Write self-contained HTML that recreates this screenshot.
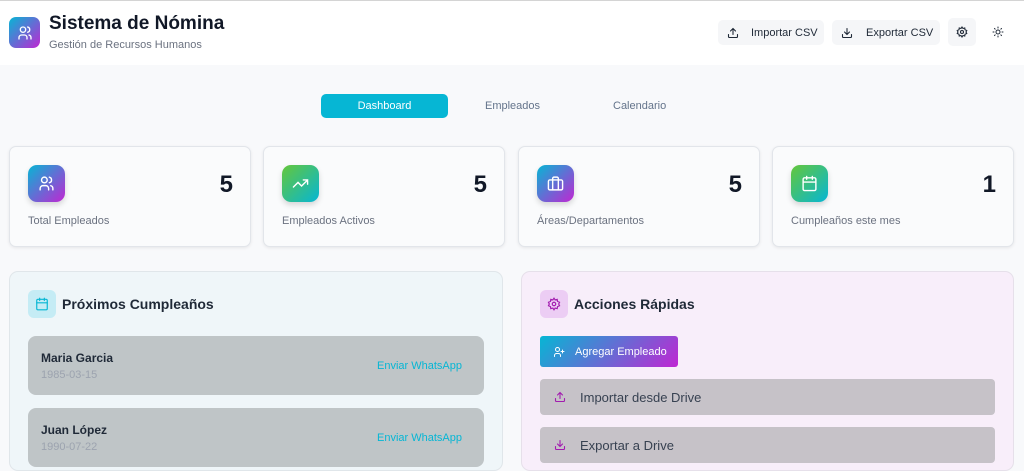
<!DOCTYPE html>
<html><head><meta charset="utf-8"><style>
*{box-sizing:border-box;margin:0;padding:0}
body{width:1024px;height:460px;overflow:hidden;background:#f8f9fb;font-family:"Liberation Sans",sans-serif;color:#111827;position:relative}
.a{position:absolute}
svg{display:block}
.hdr{left:0;top:0;width:1024px;height:65px;background:#fff;border-top:1px solid #d4d4d4}
.btn{background:#f5f6f8;border-radius:5px;font-size:11px;color:#1f2937;display:flex;align-items:center}
.card{background:#fafbfc;border:1px solid #e2e5ea;border-radius:7px;box-shadow:0 1px 3px rgba(0,0,0,.08);width:242px;height:101px;top:146px}
.ic{left:18px;top:18px;width:37px;height:37px;border-radius:9px;box-shadow:0 3px 6px rgba(0,0,0,.15);display:flex;align-items:center;justify-content:center}
.num{right:17px;top:24px;font-size:24px;font-weight:bold;color:#111827}
.lbl{left:18px;top:68px;font-size:11px;color:#6b7280}
.g1{background:linear-gradient(135deg,#06b6d4,#c026d3)}
.g2{background:linear-gradient(135deg,#65c73a,#06b6d4)}
.row{background:#bfc5c7;border-radius:8px;width:456px;height:59px;left:18px}
.nm{left:13px;top:15px;font-size:12px;font-weight:bold;color:#1f2937}
.dt{left:13px;top:33px;font-size:11px;color:#9ca3af}
.wa{right:22px;top:24px;font-size:11px;color:#06b6d4}
.gr{background:#c6c2c8;border-radius:4px;width:455px;height:36px;left:18px;font-size:13px;color:#374151;display:flex;align-items:center}
</style></head><body>
<div class="a hdr"></div>
<div class="a g1" style="left:9px;top:17px;width:31px;height:31px;border-radius:7px;display:flex;align-items:center;justify-content:center">
<svg width="16" height="16" viewBox="0 0 24 24" fill="none" stroke="#fff" stroke-width="2" stroke-linecap="round"><circle cx="9" cy="7" r="4"/><path d="M3 21v-2a4 4 0 0 1 4-4h4a4 4 0 0 1 4 4v2M16 3.1a4 4 0 0 1 0 7.8M21 21v-2a4 4 0 0 0-3-3.9"/></svg></div>
<div class="a" style="left:49px;top:13px;font-size:19px;font-weight:bold;color:#111827">Sistema de Nómina</div>
<div class="a" style="left:49px;top:39px;font-size:11px;color:#6b7280">Gestión de Recursos Humanos</div>
<div class="a btn" style="left:718px;top:20px;width:106px;height:25px;padding-left:9px"><svg width="12" height="12" viewBox="0 0 24 24" fill="none" stroke="#1f2937" stroke-width="2.2" stroke-linecap="round"><path d="M21 15v4a2 2 0 0 1-2 2H5a2 2 0 0 1-2-2v-4M17 8l-5-5-5 5M12 3v12"/></svg><span style="margin-left:12px">Importar CSV</span></div>
<div class="a btn" style="left:832px;top:20px;width:108px;height:25px;padding-left:9px"><svg width="12" height="12" viewBox="0 0 24 24" fill="none" stroke="#1f2937" stroke-width="2.2" stroke-linecap="round"><path d="M21 15v4a2 2 0 0 1-2 2H5a2 2 0 0 1-2-2v-4M7 10l5 5 5-5M12 15V3"/></svg><span style="margin-left:13px">Exportar CSV</span></div>
<div class="a btn" style="left:948px;top:18px;width:28px;height:28px;justify-content:center"><svg width="12" height="12" viewBox="0 0 24 24" fill="none" stroke="#1f2937" stroke-width="2.2"><circle cx="12" cy="12" r="3"/><path d="M12 2l2 3 3.5-1 .5 3.5 3.5 1.5-1.5 3 1.5 3-3.5 1.5-.5 3.5-3.5-1-2 3-2-3-3.5 1-.5-3.5L2.5 15 4 12 2.5 9 6 7.5 6.5 4 10 5z"/></svg></div>
<div class="a" style="left:992px;top:26px"><svg width="12" height="12" viewBox="0 0 24 24" fill="none" stroke="#1f2937" stroke-width="2" stroke-linecap="round"><circle cx="12" cy="12" r="4"/><path d="M12 2v2M12 20v2M4.9 4.9l1.4 1.4M17.7 17.7l1.4 1.4M2 12h2M20 12h2M4.9 19.1l1.4-1.4M17.7 6.3l1.4-1.4"/></svg></div>

<div class="a" style="left:321px;top:94px;width:127px;height:24px;background:#06b6d4;border-radius:5px;color:#fff;font-size:11px;text-align:center;line-height:24px">Dashboard</div>
<div class="a" style="left:485px;top:100px;font-size:11px;color:#64748b">Empleados</div>
<div class="a" style="left:613px;top:100px;font-size:11px;color:#64748b">Calendario</div>

<div class="a card" style="left:9px"><div class="a ic g1"><svg width="17" height="17" viewBox="0 0 24 24" fill="none" stroke="#fff" stroke-width="2" stroke-linecap="round"><circle cx="9" cy="7" r="4"/><path d="M3 21v-2a4 4 0 0 1 4-4h4a4 4 0 0 1 4 4v2M16 3.1a4 4 0 0 1 0 7.8M21 21v-2a4 4 0 0 0-3-3.9"/></svg></div><div class="a num">5</div><div class="a lbl">Total Empleados</div></div>
<div class="a card" style="left:263px"><div class="a ic g2"><svg width="17" height="17" viewBox="0 0 24 24" fill="none" stroke="#fff" stroke-width="2" stroke-linecap="round"><path d="M22 7l-8.5 8.5-5-5L2 17M16 7h6v6"/></svg></div><div class="a num">5</div><div class="a lbl">Empleados Activos</div></div>
<div class="a card" style="left:518px"><div class="a ic g1"><svg width="17" height="17" viewBox="0 0 24 24" fill="none" stroke="#fff" stroke-width="2" stroke-linecap="round"><rect x="2" y="7" width="20" height="14" rx="2"/><path d="M16 21V5a2 2 0 0 0-2-2h-4a2 2 0 0 0-2 2v16"/></svg></div><div class="a num">5</div><div class="a lbl">Áreas/Departamentos</div></div>
<div class="a card" style="left:772px"><div class="a ic g2"><svg width="17" height="17" viewBox="0 0 24 24" fill="none" stroke="#fff" stroke-width="2" stroke-linecap="round"><rect x="3" y="4" width="18" height="18" rx="2"/><path d="M16 2v4M8 2v4M3 10h18"/></svg></div><div class="a num">1</div><div class="a lbl">Cumpleaños este mes</div></div>

<div class="a" style="left:9px;top:271px;width:494px;height:200px;background:#eff6f9;border:1px solid #e0e6ea;border-radius:9px">
<div class="a" style="left:18px;top:18px;width:28px;height:28px;border-radius:6px;background:#c5ecf5;display:flex;align-items:center;justify-content:center"><svg width="14" height="14" viewBox="0 0 24 24" fill="none" stroke="#06b6d4" stroke-width="2" stroke-linecap="round"><rect x="3" y="4" width="18" height="18" rx="2"/><path d="M16 2v4M8 2v4M3 10h18"/></svg></div>
<div class="a" style="left:52px;top:24px;font-size:14px;font-weight:bold;color:#1f2937">Próximos Cumpleaños</div>
<div class="a row" style="top:64px"><div class="a nm">Maria Garcia</div><div class="a dt">1985-03-15</div><div class="a wa">Enviar WhatsApp</div></div>
<div class="a row" style="top:136px"><div class="a nm">Juan López</div><div class="a dt">1990-07-22</div><div class="a wa">Enviar WhatsApp</div></div>
</div>

<div class="a" style="left:521px;top:271px;width:493px;height:200px;background:#f8eefa;border:1px solid #e6e0ea;border-radius:9px">
<div class="a" style="left:18px;top:18px;width:28px;height:28px;border-radius:6px;background:#eccdf4;display:flex;align-items:center;justify-content:center"><svg width="14" height="14" viewBox="0 0 24 24" fill="none" stroke="#a21caf" stroke-width="2"><circle cx="12" cy="12" r="3"/><path d="M12 2l2 3 3.5-1 .5 3.5 3.5 1.5-1.5 3 1.5 3-3.5 1.5-.5 3.5-3.5-1-2 3-2-3-3.5 1-.5-3.5L2.5 15 4 12 2.5 9 6 7.5 6.5 4 10 5z"/></svg></div>
<div class="a" style="left:52px;top:24px;font-size:14px;font-weight:bold;color:#1f2937">Acciones Rápidas</div>
<div class="a g1" style="left:18px;top:64px;width:138px;height:31px;border-radius:3px;color:#fff;font-size:11px;display:flex;align-items:center;padding-left:13px"><svg width="12" height="12" viewBox="0 0 24 24" fill="none" stroke="#fff" stroke-width="2" stroke-linecap="round"><circle cx="9" cy="7" r="4"/><path d="M3 21v-2a4 4 0 0 1 4-4h4a4 4 0 0 1 4 4v2M19 8v6M22 11h-6"/></svg><span style="margin-left:10px">Agregar Empleado</span></div>
<div class="a gr" style="top:107px;padding-left:14px"><svg width="12" height="12" viewBox="0 0 24 24" fill="none" stroke="#a21caf" stroke-width="2.2" stroke-linecap="round"><path d="M21 15v4a2 2 0 0 1-2 2H5a2 2 0 0 1-2-2v-4M17 8l-5-5-5 5M12 3v12"/></svg><span style="margin-left:14px">Importar desde Drive</span></div>
<div class="a gr" style="top:155px;padding-left:14px"><svg width="12" height="12" viewBox="0 0 24 24" fill="none" stroke="#a21caf" stroke-width="2.2" stroke-linecap="round"><path d="M21 15v4a2 2 0 0 1-2 2H5a2 2 0 0 1-2-2v-4M7 10l5 5 5-5M12 15V3"/></svg><span style="margin-left:14px">Exportar a Drive</span></div>
</div>
</body></html>
